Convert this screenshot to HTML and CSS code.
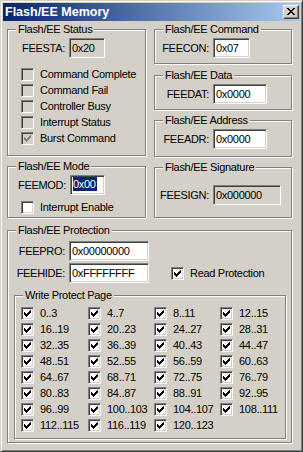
FILE: index.html
```html
<!DOCTYPE html>
<html>
<head>
<meta charset="utf-8">
<title>Flash/EE Memory</title>
<link rel="stylesheet" href="styles.css">
</head>
<body>
<svg class="defs" aria-hidden="true">
  <symbol id="chk" viewBox="0 0 11 11"><path d="M8 2h1v1H8zM7 3h2v1H7zM2 4h1v1H2zM6 4h3v1H6zM2 5h2v1H2zM5 5h3v1H5zM2 6h5v1H2zM3 7h3v1H3zM4 8h1v1H4z"/></symbol>
</svg>
<div class="window">
  <div class="titlebar">
    <span class="title">Flash/EE Memory</span>
    <span class="close"><svg class="xic" width="8" height="7" viewBox="0 0 8 7"><path d="M0 0h2v1H0zM6 0h2v1H6zM1 1h2v1H1zM5 1h2v1H5zM2 2h4v1H2zM3 3h2v1H3zM2 4h4v1H2zM1 5h2v1H1zM5 5h2v1H5zM0 6h2v1H0zM6 6h2v1H6z"/></svg></span>
  </div>
  <div class="body">
    <div class="cols">
      <div class="col">
        <div class="group g-status">
          <span class="legend">Flash/EE Status</span>
          <div class="field"><span class="lbl">FEESTA:</span><span class="tb ro w-sta">0x20</span></div>
          <div class="list">
            <div class="cb"><span class="box dis"></span>Command Complete</div>
            <div class="cb"><span class="box dis"></span>Command Fail</div>
            <div class="cb"><span class="box dis"></span>Controller Busy</div>
            <div class="cb"><span class="box dis"></span>Interrupt Status</div>
            <div class="cb"><span class="box dis"><svg class="ck"><use href="#chk"/></svg></span>Burst Command</div>
          </div>
        </div>
        <div class="group g-mode">
          <span class="legend">Flash/EE Mode</span>
          <div class="field"><span class="lbl lbl-mod">FEEMOD:</span><span class="tb w-mod"><span class="sel">0x00</span></span></div>
          <div class="cb cb-ie"><span class="box"></span>Interrupt Enable</div>
        </div>
      </div>
      <div class="col col-right">
        <div class="group g-small">
          <span class="legend">Flash/EE Command</span>
          <div class="field"><span class="lbl">FEECON:</span><span class="tb w-con">0x07</span></div>
        </div>
        <div class="group g-small g-data">
          <span class="legend">Flash/EE Data</span>
          <div class="field"><span class="lbl">FEEDAT:</span><span class="tb w-dat">0x0000</span></div>
        </div>
        <div class="group g-addr">
          <span class="legend">Flash/EE Address</span>
          <div class="field"><span class="lbl">FEEADR:</span><span class="tb w-dat">0x0000</span></div>
        </div>
        <div class="group g-sign">
          <span class="legend">Flash/EE Signature</span>
          <div class="field"><span class="lbl">FEESIGN:</span><span class="tb ro w-sign">0x000000</span></div>
        </div>
      </div>
    </div>
    <div class="group g-prot">
      <span class="legend">Flash/EE Protection</span>
      <div class="field"><span class="lbl">FEEPRO:</span><span class="tb w-pro">0x00000000</span></div>
      <div class="field f-hide"><span class="lbl">FEEHIDE:</span><span class="tb w-pro">0xFFFFFFFF</span>
        <div class="cb cb-rp"><span class="box"><svg class="ck"><use href="#chk"/></svg></span>Read Protection</div>
      </div>
      <div class="group g-wp">
        <span class="legend">Write Protect Page</span>
        <div class="grid">
          <div class="cb"><span class="box"><svg class="ck"><use href="#chk"/></svg></span>0..3</div>
          <div class="cb"><span class="box"><svg class="ck"><use href="#chk"/></svg></span>4..7</div>
          <div class="cb"><span class="box"><svg class="ck"><use href="#chk"/></svg></span>8..11</div>
          <div class="cb"><span class="box"><svg class="ck"><use href="#chk"/></svg></span>12..15</div>
          <div class="cb"><span class="box"><svg class="ck"><use href="#chk"/></svg></span>16..19</div>
          <div class="cb"><span class="box"><svg class="ck"><use href="#chk"/></svg></span>20..23</div>
          <div class="cb"><span class="box"><svg class="ck"><use href="#chk"/></svg></span>24..27</div>
          <div class="cb"><span class="box"><svg class="ck"><use href="#chk"/></svg></span>28..31</div>
          <div class="cb"><span class="box"><svg class="ck"><use href="#chk"/></svg></span>32..35</div>
          <div class="cb"><span class="box"><svg class="ck"><use href="#chk"/></svg></span>36..39</div>
          <div class="cb"><span class="box"><svg class="ck"><use href="#chk"/></svg></span>40..43</div>
          <div class="cb"><span class="box"><svg class="ck"><use href="#chk"/></svg></span>44..47</div>
          <div class="cb"><span class="box"><svg class="ck"><use href="#chk"/></svg></span>48..51</div>
          <div class="cb"><span class="box"><svg class="ck"><use href="#chk"/></svg></span>52..55</div>
          <div class="cb"><span class="box"><svg class="ck"><use href="#chk"/></svg></span>56..59</div>
          <div class="cb"><span class="box"><svg class="ck"><use href="#chk"/></svg></span>60..63</div>
          <div class="cb"><span class="box"><svg class="ck"><use href="#chk"/></svg></span>64..67</div>
          <div class="cb"><span class="box"><svg class="ck"><use href="#chk"/></svg></span>68..71</div>
          <div class="cb"><span class="box"><svg class="ck"><use href="#chk"/></svg></span>72..75</div>
          <div class="cb"><span class="box"><svg class="ck"><use href="#chk"/></svg></span>76..79</div>
          <div class="cb"><span class="box"><svg class="ck"><use href="#chk"/></svg></span>80..83</div>
          <div class="cb"><span class="box"><svg class="ck"><use href="#chk"/></svg></span>84..87</div>
          <div class="cb"><span class="box"><svg class="ck"><use href="#chk"/></svg></span>88..91</div>
          <div class="cb"><span class="box"><svg class="ck"><use href="#chk"/></svg></span>92..95</div>
          <div class="cb"><span class="box"><svg class="ck"><use href="#chk"/></svg></span>96..99</div>
          <div class="cb"><span class="box"><svg class="ck"><use href="#chk"/></svg></span>100..103</div>
          <div class="cb"><span class="box"><svg class="ck"><use href="#chk"/></svg></span>104..107</div>
          <div class="cb"><span class="box"><svg class="ck"><use href="#chk"/></svg></span>108..111</div>
          <div class="cb"><span class="box"><svg class="ck"><use href="#chk"/></svg></span>112..115</div>
          <div class="cb"><span class="box"><svg class="ck"><use href="#chk"/></svg></span>116..119</div>
          <div class="cb"><span class="box"><svg class="ck"><use href="#chk"/></svg></span>120..123</div>
        </div>
      </div>
    </div>
  </div>
</div>
</body>
</html>
```
FILE: styles.css
```css
* { box-sizing: border-box; }
html, body { margin: 0; padding: 0; }
body {
  width: 303px;
  height: 452px;
  overflow: hidden;
  background: #D4D0C8;
  font-family: "Liberation Sans", Arial, sans-serif;
  font-size: 11px;
  letter-spacing: -0.3px;
  color: #000;
}
.defs { position: absolute; width: 0; height: 0; overflow: hidden; }

.window {
  width: 303px;
  height: 452px;
  background: #D4D0C8;
  border: 1px solid;
  border-color: #D4D0C8 #404040 #404040 #D4D0C8;
  box-shadow: inset 1px 1px #fff, inset -1px -1px #808080;
  padding: 2px;
  display: flex;
  flex-direction: column;
}

.titlebar {
  height: 18px;
  flex: none;
  background: linear-gradient(to right, #0A246A, #A6CAF0);
  display: flex;
  align-items: center;
  justify-content: space-between;
  padding: 0 1px 0 2px;
}
.title {
  color: #fff;
  font-weight: bold;
  font-size: 12.5px;
  letter-spacing: 0;
  line-height: 18px;
  white-space: nowrap;
}
.close {
  display: block;
  width: 16px;
  height: 14px;
  background: #D4D0C8;
  border: 1px solid;
  border-color: #fff #404040 #404040 #fff;
  box-shadow: inset -1px -1px #808080;
}
.xic { display: block; margin: 2px 0 0 3px; fill: #000; }

.body { flex: 1; padding: 8px 8px 0 4px; }

.cols {
  display: grid;
  grid-template-columns: 139px 138px;
  column-gap: 8px;
  align-items: start;
}
.col { display: flex; flex-direction: column; }

.group {
  position: relative;
  border: 1px solid #808080;
  box-shadow: inset 1px 1px #fff, 1px 1px #fff;
}
.legend {
  position: absolute;
  top: -7px;
  left: 8px;
  padding: 0 2px;
  background: #D4D0C8;
  line-height: 13px;
  white-space: nowrap;
}

.g-status { height: 127px; padding-top: 8px; }
.g-mode { height: 52px; margin-top: 10px; padding-top: 8px; }
.g-small { height: 35px; padding-top: 8px; }
.g-data { margin-top: 11px; }
.g-addr { height: 37px; margin-top: 10px; padding-top: 8px; }
.g-sign { height: 51px; margin-top: 10px; padding-top: 17px; }
.g-prot { height: 213px; margin-top: 12px; padding-top: 10px; }
.g-wp { width: 272px; height: 144px; margin: 12px 0 0 6px; padding: 11px 0 0 6px; }

.field { display: flex; align-items: center; height: 20px; }
.f-hide { margin-top: 2px; }
.lbl {
  flex: none;
  width: 61px;
  padding-right: 4px;
  text-align: right;
  white-space: nowrap;
  line-height: 13px;
}
.lbl-mod { width: 62px; }
.col-right .lbl { width: 58px; }

.tb {
  flex: none;
  display: block;
  height: 20px;
  border: 1px solid;
  border-color: #808080 #fff #fff #808080;
  box-shadow: inset 1px 1px #404040, inset -1px -1px #D4D0C8;
  background: #fff;
  padding: 0 2px;
  line-height: 18px;
  white-space: nowrap;
  overflow: hidden;
}
.tb.ro { background: #D4D0C8; }
.w-sta { width: 36px; }
.w-mod { width: 35px; }
.w-con { width: 37px; }
.w-dat { width: 54px; }
.w-sign { width: 68px; }
.w-pro { width: 80px; }

.sel {
  display: inline-block;
  background: #0A246A;
  color: #fff;
  line-height: 14px;
  padding-right: 1px;
  vertical-align: 1px;
}

.list {
  display: flex;
  flex-direction: column;
  gap: 3px;
  margin: 10px 0 0 13px;
}
.cb {
  display: flex;
  align-items: center;
  height: 13px;
  line-height: 13px;
  white-space: nowrap;
}
.cb-ie { margin: 6px 0 0 13px; }
.cb-rp { margin-left: 22px; }

.box {
  flex: none;
  width: 13px;
  height: 13px;
  margin-right: 6px;
  border: 1px solid;
  border-color: #808080 #fff #fff #808080;
  box-shadow: inset 1px 1px #404040, inset -1px -1px #D4D0C8;
  background: #fff;
}
.box.dis { background: #D4D0C8; }
.ck { display: block; width: 11px; height: 11px; fill: #000; }
.box.dis .ck { fill: #808080; }

.grid {
  display: grid;
  grid-template-columns: 67px 66px 66px 66px;
  row-gap: 3px;
}
```
